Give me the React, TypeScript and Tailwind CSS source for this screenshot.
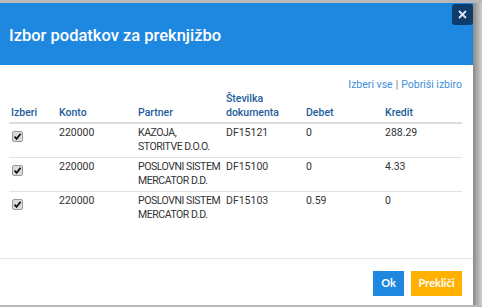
import React from "react";

const rows = [
  { konto: "220000", partner: ["KAZOJA,", "STORITVE D.O.O."], dok: "DF15121", debet: "0", kredit: "288.29" },
  { konto: "220000", partner: ["POSLOVNI SISTEM", "MERCATOR D.D."], dok: "DF15100", debet: "0", kredit: "4.33" },
  { konto: "220000", partner: ["POSLOVNI SISTEM", "MERCATOR D.D."], dok: "DF15103", debet: "0.59", kredit: "0" },
];

function Check() {
  return (
    <span className="mt-[5px] ml-[1px] flex h-[11px] w-[11px] items-center justify-center rounded-[2px] border border-[#9a9a9a] bg-[#dcdcdc]">
      <svg width="9" height="9" viewBox="0 0 9 9">
        <path d="M1.5 4.6 L3.6 6.8 L7.6 1.8" fill="none" stroke="#111" strokeWidth="1.8" />
      </svg>
    </span>
  );
}

export default function App() {
  const cols = "grid grid-cols-[50px_79px_88px_80px_79px_77px]";
  return (
    <div className="relative h-[307px] w-[482px] overflow-hidden bg-[#b9b9b9]" style={{ fontFamily: "Roboto, 'Liberation Sans', sans-serif" }}>
      <div className="flex h-full">
        <div className="mt-[3px] flex h-[302px] w-[473px] flex-col bg-white">
          <div className="flex h-[62px] items-center bg-[#1e88e0] pl-[9px] pt-[4px]">
            <span className="text-[16.5px] font-medium text-white">Izbor podatkov za preknjižbo</span>
          </div>
          <div className="flex flex-1 flex-col pl-[9px] pr-[11px] pt-[13px]">
            <div className="flex justify-end text-[10.5px] leading-[14px] text-[#3d8fd8]">
              <span>Izberi vse</span>
              <span className="mx-[3px] text-[#777]">|</span>
              <span>Pobriši izbiro</span>
            </div>
            <div className={`${cols} items-end border-b-2 border-[#dedede] pb-[2px] text-[10.5px] font-medium leading-[14px] text-[#1d5d9b]`}>
              <div className="pl-[2px]">Izberi</div>
              <div>Konto</div>
              <div>Partner</div>
              <div>
                Številka
                <br />
                dokumenta
              </div>
              <div>Debet</div>
              <div>Kredit</div>
            </div>
            {rows.map((r, i) => (
              <div key={i} className={`${cols} whitespace-nowrap ${i < rows.length - 1 ? "border-b border-[#e2e2e2]" : ""} pb-[3px] pt-[2px] text-[10.5px] leading-[14px] text-[#333]`}>
                <div className="flex items-start pl-[2px]">
                  <Check />
                </div>
                <div>{r.konto}</div>
                <div className="tracking-[-0.45px]">
                  {r.partner[0]}
                  <br />
                  {r.partner[1]}
                </div>
                <div>{r.dok}</div>
                <div>{r.debet}</div>
                <div>{r.kredit}</div>
              </div>
            ))}
          </div>
          <div className="flex h-[47px] justify-end gap-[7px] border-t border-[#e6e6e6] pr-[11px] pt-[12px]" style={{ fontFamily: "Lato, Roboto, sans-serif" }}>
            <div className="flex h-[25px] w-[31px] items-center justify-center bg-[#1e88e0] text-[11px] font-bold text-white">Ok</div>
            <div className="flex h-[25px] w-[51px] items-center justify-center bg-[#ffb000] text-[11px] font-bold text-white">Prekliči</div>
          </div>
        </div>
        <div className="mt-[3px] h-[302px] w-[9px] bg-gradient-to-r from-[#8a8a8a] to-[#d0d0d0]" />
      </div>
      <div className="absolute right-[9px] top-[4px] flex h-[21px] w-[21px] items-center justify-center rounded-[3px] bg-[#0e3d6c]">
        <svg width="9" height="9" viewBox="0 0 9 9">
          <path d="M1 1 L8 8 M8 1 L1 8" stroke="#dfe8f2" strokeWidth="1.8" />
        </svg>
      </div>
    </div>
  );
}
